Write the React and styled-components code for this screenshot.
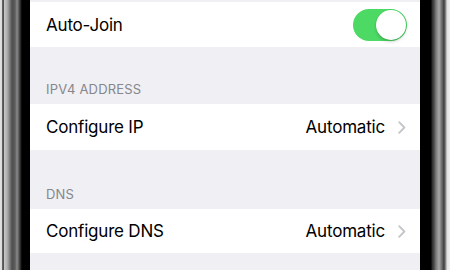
import React from "react";
import styled, { createGlobalStyle } from "styled-components";

const GlobalStyle = createGlobalStyle`
  html, body {
    margin: 0;
    padding: 0;
    background: #ffffff;
  }
  body {
    font-family: Inter, "Liberation Sans", sans-serif;
    -webkit-font-smoothing: antialiased;
  }
`;

const rows = [
  { type: "toggle", label: "Auto-Join", on: true },
  { type: "header", label: "IPV4 ADDRESS", height: 57 },
  { type: "link", label: "Configure IP", value: "Automatic", height: 46 },
  { type: "header", label: "DNS", height: 59 },
  { type: "link", label: "Configure DNS", value: "Automatic", height: 44 },
];

const App = () => (
  <>
    <GlobalStyle />
    <Phone>
      <Bezel side="left" />
      <Screen>
        <TopGap />
        {rows.map((row) => {
          if (row.type === "header") {
            return (
              <SectionHeader key={row.label} height={row.height}>
                {row.label}
              </SectionHeader>
            );
          }
          return (
            <Cell key={row.label} height={row.height}>
              <CellLabel>{row.label}</CellLabel>
              {row.type === "toggle" ? (
                <Switch on={row.on}>
                  <Knob />
                </Switch>
              ) : (
                <Detail>
                  <CellValue>{row.value}</CellValue>
                  <Chevron width="8" height="13" viewBox="0 0 8 13">
                    <path
                      d="M1.2 1.2 L6.4 6.5 L1.2 11.8"
                      fill="none"
                      stroke="#c4c4c9"
                      strokeWidth="1.8"
                      strokeLinecap="round"
                      strokeLinejoin="round"
                    />
                  </Chevron>
                </Detail>
              )}
            </Cell>
          );
        })}
      </Screen>
      <Bezel side="right" />
    </Phone>
  </>
);

const Phone = styled.div`
  display: flex;
  width: 450px;
  height: 270px;
  overflow: hidden;
`;

const Bezel = styled.div`
  flex: 0 0 30px;
  height: 100%;
  background: ${({ side }) =>
    side === "left"
      ? `linear-gradient(to right,
          #e4e4e4 0px, #d8d8d8 2px, #6a6a6a 2px, #4a4a4a 4px,
          #c8c8c8 4px, #b0b0b0 7px, #8c8c8c 9px, #4e4e4e 12px,
          #5c5c5c 15px, #8a8a8a 17px, #555 19px, #1a1a1a 21px,
          #000 22px, #000 30px)`
      : `linear-gradient(to left,
          #f0f0f0 0px, #e0e0e0 3px, #9a9a9a 4px, #3c3c3c 6px,
          #6a6a6a 8px, #a8a8a8 11px, #7a7a7a 14px, #4a4a4a 16px,
          #2a2a2a 18px, #000 19px, #000 30px)`};
`;

const Screen = styled.div`
  flex: 1;
  display: flex;
  flex-direction: column;
  background: #efeff4;
`;

const TopGap = styled.div`
  height: 2px;
  flex-shrink: 0;
`;

const SectionHeader = styled.div`
  display: flex;
  align-items: flex-end;
  height: ${({ height }) => height}px;
  flex-shrink: 0;
  box-sizing: border-box;
  padding: 0 16px 7px;
  font-size: 13px;
  line-height: 16px;
  letter-spacing: 0.2px;
  color: #86868b;
`;

const Cell = styled.div`
  display: flex;
  align-items: center;
  justify-content: space-between;
  height: ${({ height = 45 }) => height}px;
  flex-shrink: 0;
  box-sizing: border-box;
  padding: 0 13px 0 16px;
  background: #ffffff;
`;

const CellLabel = styled.span`
  font-size: 17px;
  color: #000000;
  letter-spacing: -0.2px;
`;

const Detail = styled.div`
  display: flex;
  align-items: center;
  gap: 13px;
`;

const CellValue = styled.span`
  font-size: 17px;
  color: #000000;
  letter-spacing: -0.2px;
`;

const Chevron = styled.svg`
  display: block;
  margin-right: 1px;
`;

const Switch = styled.div`
  display: flex;
  align-items: center;
  justify-content: ${({ on }) => (on ? "flex-end" : "flex-start")};
  width: 54px;
  height: 32px;
  box-sizing: border-box;
  padding: 1px;
  border-radius: 16px;
  background: ${({ on }) => (on ? "#4cd964" : "#e5e5ea")};
`;

const Knob = styled.div`
  width: 30px;
  height: 30px;
  border-radius: 50%;
  background: #ffffff;
  box-shadow: 0 2px 3px rgba(0, 0, 0, 0.18), 0 0 0 0.5px rgba(0, 0, 0, 0.06);
`;

export default App;
